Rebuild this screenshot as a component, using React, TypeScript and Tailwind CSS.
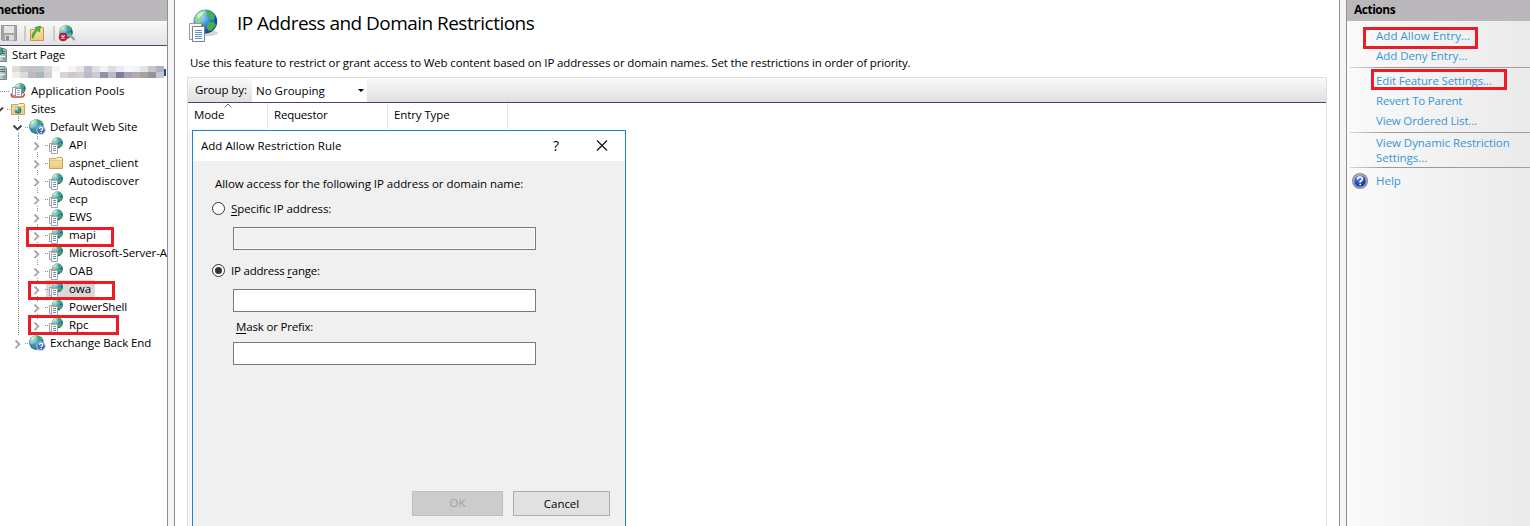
import React from "react";

type IconProps = { x?: number; y?: number };

function Globe({ cx, cy, r }: { cx: number; cy: number; r: number }) {
  return (
    <g transform={`translate(${cx} ${cy}) scale(${r / 10})`}>
      <circle r="10" fill="url(#ocean)" />
      <path d="M-8-5C-6-8-3-9.500 0-9.700L1-7-2-5-3-1-6 2-9 0Z" fill="#8fd68a" />
      <path d="M1-9.500Q6-8.500 8-5L7-1 4-2 2-5Z" fill="#3fb54a" />
      <path d="M2 1 7 0 9 3 6 7 3 8 1 5Z" fill="#4cae3c" />
      <path d="M-5 4-2 3 0 6-2 9-5 8Z" fill="#3f9d4a" />
      <path d="M-7-5Q-5-8-1-8.500L-3-5-6-2Z" fill="#e4f8ee" opacity=".8" />
    </g>
  );
}

function Defs() {
  return (
    <svg className="absolute h-0 w-0" aria-hidden="true">
      <defs>
        <radialGradient id="ocean" cx=".3" cy=".3" r=".8">
          <stop offset="0" stopColor="#c4ecfb" />
          <stop offset=".45" stopColor="#3b93e6" />
          <stop offset=".8" stopColor="#1450bb" />
          <stop offset="1" stopColor="#0d3c96" />
        </radialGradient>
        <linearGradient id="folder" x1="0" y1="0" x2="0" y2="1">
          <stop offset="0" stopColor="#f8e3a6" />
          <stop offset="1" stopColor="#ecca7c" />
        </linearGradient>
        <linearGradient id="tower" x1="0" y1="0" x2="1" y2="0">
          <stop offset="0" stopColor="#dfe8ea" />
          <stop offset="1" stopColor="#8fa3ab" />
        </linearGradient>
        <radialGradient id="help" cx=".4" cy=".25" r=".8">
          <stop offset="0" stopColor="#6f93e8" />
          <stop offset=".6" stopColor="#1f43b0" />
          <stop offset="1" stopColor="#12277a" />
        </radialGradient>
      </defs>
    </svg>
  );
}

function AppIcon({ x = 0, y = 0 }: IconProps) {
  return (
    <g transform={`translate(${x} ${y})`}>
      <Globe cx={9.3} cy={5.9} r={5.6} />
      <path d="M1.500 6.500h6v8h-6z" fill="#fff" stroke="#a3a3a3" />
      <path d="M3.500 7.500h6v9h-6z" fill="#fff" stroke="#a3a3a3" />
      <path d="M5 9.500h3M5 11.500h3M5 13.500h3" stroke="#5a90cc" />
    </g>
  );
}

function FolderIcon({ x = 0, y = 0, globe = false }: IconProps & { globe?: boolean }) {
  return (
    <g transform={`translate(${x} ${y})`}>
      <path d="M.500 2.500V12.500h13v-10l-.500-1H8l-1 1z" fill="url(#folder)" stroke="#c9a357" />
      <path d="M8 3h4.500" stroke="#fffbe9" />
      <path d="M1 4.500h12" stroke="#d9b565" strokeWidth=".6" />
      {globe && <Globe cx={7} cy={8.200} r={3.300} />}
    </g>
  );
}

function SiteIcon({ x = 0, y = 0 }: IconProps) {
  return (
    <g transform={`translate(${x} ${y})`}>
      <Globe cx={7.300} cy={7.500} r={7.300} />
      <circle cx="12" cy="11.200" r="4.300" fill="#4a70ad" stroke="#c9d8ec" />
      <path d="M10.400 9.800q.2-1.400 1.700-1.400t1.600 1.400q0 .9-1.600 1.700v.6M12.100 13v1.200" fill="none" stroke="#fff" strokeWidth="1.200" />
    </g>
  );
}

function PoolsIcon({ x = 0, y = 0 }: IconProps) {
  return (
    <g transform={`translate(${x} ${y})`}>
      <Globe cx={10} cy={5.500} r={5.600} />
      <path d="M1.500 10.500Q.500 13 3 14h9q3-1 2-3.500" fill="none" stroke="#d8463f" strokeWidth="1.600" />
      <path d="M2.500 4.500h5v8h-5z" fill="#fff" stroke="#a0a0a0" />
      <path d="M5.500 5.500h6v8h-6z" fill="#fff" stroke="#909090" />
      <path d="M7 7.500h3M7 9.500h3M7 11.500h3" stroke="#8fa6c4" />
    </g>
  );
}

function ServerIcon({ x = 0, y = 0, globe = false }: IconProps & { globe?: boolean }) {
  return (
    <g transform={`translate(${x} ${y})`}>
      <path d="M-3 1.500H4.500l2 1.500v11.500H-3Z" fill="url(#tower)" stroke="#74858c" />
      <path d="M0 4.500h5M0 6.500h5" stroke="#5a707a" />
      <path d="M0 9.500h5" stroke="#f1f6f7" />
      <path d="M3 12h2" stroke="#55b948" strokeWidth="1.500" />
      {globe && <Globe cx={-1} cy={4} r={4} />}
    </g>
  );
}

function Chevron({ x, open = false }: { x: number; open?: boolean }) {
  return open ? (
    <path d={`M${x - 4} 7.500l4 4 4-4`} fill="none" stroke="#404040" strokeWidth="1.900" />
  ) : (
    <path d={`M${x - 2} 6.500l3.800 3.800-3.800 3.800`} fill="none" stroke="#a6a6a6" strokeWidth="1.900" />
  );
}

type Kind = "start" | "server" | "pools" | "sites" | "site" | "app" | "folder";
type Node = { label: string; kind: Kind; track: string; open?: boolean; selected?: boolean; last?: boolean };

const nodes: Node[] = [
  { label: "Start Page", kind: "start", track: "tracking-[-0.15px]" },
  { label: "", kind: "server", track: "" },
  { label: "Application Pools", kind: "pools", track: "tracking-[0.08px]" },
  { label: "Sites", kind: "sites", track: "tracking-[-0.1px]", open: true },
  { label: "Default Web Site", kind: "site", track: "tracking-[-0.1px]", open: true },
  { label: "API", kind: "app", track: "tracking-[0.1px]" },
  { label: "aspnet_client", kind: "folder", track: "tracking-[-0.1px]" },
  { label: "Autodiscover", kind: "app", track: "tracking-[0px]" },
  { label: "ecp", kind: "app", track: "tracking-[-0.1px]" },
  { label: "EWS", kind: "app", track: "tracking-[-0.1px]" },
  { label: "mapi", kind: "app", track: "tracking-[-0.05px]" },
  { label: "Microsoft-Server-ActiveSync", kind: "app", track: "tracking-[-0.1px]" },
  { label: "OAB", kind: "app", track: "tracking-[0.1px]" },
  { label: "owa", kind: "app", track: "tracking-[-0.1px]", selected: true },
  { label: "PowerShell", kind: "app", track: "tracking-[-0.15px]" },
  { label: "Rpc", kind: "app", track: "tracking-[-0.05px]" },
  { label: "Exchange Back End", kind: "site", track: "tracking-[-0.1px]", last: true },
];

function Gutter({ node }: { node: Node }) {
  const dots = { stroke: "#8a8a8a", strokeDasharray: "1 1", fill: "none" };
  switch (node.kind) {
    case "start":
    case "server":
      return (
        <svg className="h-[18px] w-3 shrink-0">
          <ServerIcon y={1} globe={node.kind === "start"} />
        </svg>
      );
    case "pools":
      return (
        <svg className="h-[18px] w-[31px] shrink-0">
          <path d="M0 9.500h10" {...dots} />
          <PoolsIcon x={10} y={1} />
        </svg>
      );
    case "sites":
      return (
        <svg className="h-[18px] w-[31px] shrink-0">
          <Chevron x={-1} open />
          <path d="M7 9.500h4M18.500 16v2" {...dots} />
          <FolderIcon x={11} y={2} globe />
        </svg>
      );
    case "site":
      return (
        <svg className="h-[18px] w-[50px] shrink-0">
          <path d={node.last ? "M18.500 0v2M25 9.500h4" : "M18.500 0v3M18.500 15v3M25 9.500h4M37.500 16v2"} {...dots} />
          <Chevron x={node.last ? 17.500 : 17.500} open={node.open} />
          <SiteIcon x={29} y={1} />
        </svg>
      );
    default:
      return (
        <svg className="h-[18px] w-[69px] shrink-0">
          {node.selected && <path d="M46 0h23v18h-23z" fill="#d9d9d9" />}
          <path d="M18.500 0v18M37.500 0v4M37.500 16v2M45 9.500h4" {...dots} />
          <Chevron x={36.500} />
          {node.kind === "folder" ? <FolderIcon x={49} y={2} /> : <AppIcon x={48} y={1} />}
        </svg>
      );
  }
}

const mosaic = [
  "#d9e0cf", "#c9c5ca", "#c6bfc5", "#bfc4c6", "#d7d6d9", "#f5f5f5", "#ffffff", "#f5f3f6", "#e8e5e9", "#b9c4cc", "#dedfe5", "#f0f3f3", "#dcdce4", "#eeeaf1", "#f3f8fa", "#f1f2f7", "#e3e3ea", "#c9c4ce", "#aeb2bd",
  "#eef0e4", "#dcd9da", "#bcb9bd", "#a9b5bb", "#d2d0d6", "#ffffff", "#d7d3d7", "#ccc8d2", "#d6cfcc", "#bbb8ca", "#c9c9d0", "#8b93a9", "#b9bac4", "#827b9b", "#a8a0b3", "#b1aab2", "#a7a395", "#97919d", "#c4c6d0",
];

function Mosaic() {
  return (
    <svg className="mb-[2px] h-3 w-[154px]" viewBox="0 0 154 12" shapeRendering="crispEdges">
      {mosaic.map((c, i) => (
        <rect key={i} x={(i % 19) * 8} y={i < 19 ? 0 : 6} width="8" height="6" fill={c} />
      ))}
      <path d="M152 3h1.500v7H152z" fill="#274b93" />
    </svg>
  );
}

function Connections() {
  return (
    <aside className="flex w-[168px] shrink-0 flex-col overflow-hidden border-r border-[#8f8f8f] bg-white">
      <h2 className="flex h-[21px] shrink-0 items-center bg-[#bbb8bb] text-[12px] font-bold tracking-[-0.45px]">
        <span className="-ml-[25px] pb-px">Connections</span>
      </h2>
      <div className="flex h-[25px] shrink-0 border-b border-[#45456f] bg-linear-to-b from-[#f9f9f9] to-[#e3e1e3]">
        <svg className="h-6 w-[100px]">
          <path d="M1.500 4.500h15v15h-14l-1-1z" fill="#a6a6a6" stroke="#969696" />
          <path d="M4 5h10v7H4z" fill="#e6e6e6" />
          <path d="M5 14h9v5.500H5z" fill="#dadada" />
          <path d="M6 15h3v4.500H6z" fill="#8e8e8e" />
          <path d="M25 5v15M54 5v15" stroke="#c5c2b0" strokeWidth="1.500" />
          <path d="M30.500 8.500h6l1-2h6v13h-13z" fill="url(#folder)" stroke="#c79c43" />
          <path d="M32 17q0-7 4.500-8l-1.500-2.500L40.500 5l-1 6-1.700-1.500Q35 11 33 17Z" fill="#48bd3a" stroke="#218a25" strokeWidth=".6" />
          <Globe cx={66} cy={11} r={6.800} />
          <circle cx="63" cy="16" r="4" fill="#c91f28" stroke="#8f1720" strokeWidth=".5" />
          <path d="M61.500 14.500l3 3m0-3-3 3" stroke="#fff" strokeWidth="1.300" />
          <path d="M67 15q2-2 4 0l3.500 4" fill="none" stroke="#8fa0ab" strokeWidth="2.200" />
        </svg>
      </div>
      <div className="flex flex-col">
        {nodes.map((node) => (
          <div key={node.kind + node.label} className="flex h-[18px] items-center whitespace-nowrap">
            <Gutter node={node} />
            {node.kind === "server" ? (
              <Mosaic />
            ) : node.selected ? (
              <span className={`flex h-[18px] w-[26px] items-center bg-[#d9d9d9] pb-px ${node.track}`}>{node.label}</span>
            ) : (
              <span className={`pb-px ${node.track}`}>{node.label}</span>
            )}
          </div>
        ))}
      </div>
    </aside>
  );
}

function Radio({ checked = false }: { checked?: boolean }) {
  return (
    <svg className="mb-px h-[13px] w-[13px] shrink-0">
      <circle cx="6.500" cy="6.500" r="6" fill="#fff" stroke="#333" />
      {checked && <circle cx="6.500" cy="6.500" r="3.500" fill="#333" />}
    </svg>
  );
}

function RuleDialog() {
  return (
    <section className="absolute top-[130px] left-[17px] flex h-[420px] w-[434px] flex-col border border-[#1883d7] bg-[#f0f0f0]">
      <div className="flex h-[30px] shrink-0 items-center bg-white pl-2">
        <h3 className="w-[352px] tracking-[0.02px]">Add Allow Restriction Rule</h3>
        <span className="w-[43px] text-[14px] leading-[14px]">?</span>
        <svg className="h-3 w-3">
          <path d="M1 .500l10 10M11 .500l-10 10" stroke="#111" strokeWidth="1.200" />
        </svg>
      </div>
      <p className="mt-[13px] ml-[22px] h-5 leading-5 tracking-[-0.05px]">Allow access for the following IP address or domain name:</p>
      <label className="mt-[5px] ml-[19px] flex h-5 items-center gap-[6px] tracking-[-0.1px]">
        <Radio />
        <span><span className="underline underline-offset-2">S</span>pecific IP address:</span>
      </label>
      <div className="mt-2 ml-10 h-[23px] w-[303px] shrink-0 border border-[#7a7a7a] shadow-[inset_0_0_0_1px_#fafafa]" />
      <label className="mt-[11px] ml-[19px] flex h-5 items-center gap-[6px] tracking-[-0.22px]">
        <Radio checked />
        <span>IP address <span className="underline underline-offset-2">r</span>ange:</span>
      </label>
      <div className="mt-2 ml-10 h-[23px] w-[303px] shrink-0 border border-[#7a7a7a] bg-white" />
      <p className="mt-[5px] ml-[43px] h-5 leading-5 tracking-[-0.17px]"><span className="underline underline-offset-2">M</span>ask or Prefix:</p>
      <div className="mt-[5px] ml-10 h-[23px] w-[303px] shrink-0 border border-[#7a7a7a] bg-white" />
      <div className="mt-[126px] mr-[15px] flex justify-end gap-[10px]">
        <button className="h-[25px] w-[91px] border border-[#bfbfbf] bg-[#cccccc] pb-px text-[#a0a0a0]">OK</button>
        <button className="h-[25px] w-[97px] border border-[#adadad] bg-[#e1e1e1] tracking-[-0.05px]">Cancel</button>
      </div>
    </section>
  );
}

function Main() {
  return (
    <main className="relative flex min-w-0 flex-1 flex-col border-x border-[#8f8f8f] bg-white pr-3 pl-3">
      <header className="flex h-[47px] shrink-0 items-center">
        <svg className="mt-[3px] -ml-px h-11 w-[51px] shrink-0">
          <ellipse cx="22" cy="30" rx="10" ry="3" fill="#d5d5d5" />
          <Globe cx={19.300} cy={18.500} r={11.900} />
          <path d="M3.500 20.500h12v16h-12z" fill="#f8f6f1" stroke="#9c988e" />
          <path d="M6.500 23.500h12v15h-12z" fill="#fff" stroke="#808080" />
          <path d="M9 27.500h7M9 29.500h7M9 31.500h7M9 33.500h7M9 35.500h7" stroke="#5b93cf" />
        </svg>
        <h1 className="mb-px text-[19px] leading-6 tracking-[-0.54px] whitespace-nowrap">IP Address and Domain Restrictions</h1>
      </header>
      <p className="mt-[7px] ml-[3px] h-[18px] shrink-0 leading-[18px] tracking-[-0.144px] whitespace-nowrap">
        Use this feature to restrict or grant access to Web content based on IP addresses or domain names. Set the restrictions in order of priority.
      </p>
      <div className="mt-[5px] flex flex-1 flex-col border border-b-0 border-[#dedede]">
        <div className="flex h-[25px] shrink-0 border-b border-[#45456f] bg-linear-to-b from-[#fafafa] to-[#e1dfe1]">
          <span className="w-16 pt-[3px] pl-[7px] leading-[18px] tracking-[-0.12px] whitespace-nowrap">Group by:</span>
          <div className="mt-px flex h-[23px] w-[115px] items-center justify-between bg-white pr-[3px] pl-1">
            <span className="tracking-[0px]">No Grouping</span>
            <svg className="h-[3px] w-[6px]"><path d="M0 0h6L3 3z" fill="#000" /></svg>
          </div>
        </div>
        <div className="flex h-[26px] shrink-0 leading-[23px] tracking-[-0.1px]">
          <div className="relative w-20 border-r border-[#e5e5e5] pl-[6px]">
            Mode
            <svg className="absolute top-0 left-[36px] h-[5px] w-2"><path d="M.500 4.500 4 1l3.500 3.500" fill="none" stroke="#666" /></svg>
          </div>
          <div className="w-[120px] border-r border-[#e5e5e5] pl-[6px] tracking-[-0.2px]">Requestor</div>
          <div className="w-[120px] border-r border-[#e5e5e5] pl-[6px]">Entry Type</div>
        </div>
        <div className="w-20 flex-1 bg-[#f7f7f7]" />
      </div>
      <RuleDialog />
    </main>
  );
}

function Rule() {
  return <div className="ml-[3px] h-px shrink-0 bg-linear-to-r from-[#d8d8d8] via-[#999] via-20% to-[#a0a0a0]" />;
}

function Actions() {
  return (
    <aside className="flex w-[184px] shrink-0 flex-col border-l border-[#8f8f8f] bg-linear-to-r from-[#fafafa] to-[#eaeaea] whitespace-nowrap text-[#3795d8]">
      <h2 className="flex h-[21px] shrink-0 items-center bg-[#bbb8bb] pb-px pl-[7px] text-[12px] font-bold tracking-[-0.5px] text-black">Actions</h2>
      <a className="mt-[5px] ml-[29px] h-5 leading-5 tracking-[0.05px]">Add Allow Entry...</a>
      <a className="ml-[29px] h-5 leading-5 tracking-[-0.05px]">Add Deny Entry...</a>
      <div className="h-px" />
      <Rule />
      <a className="mt-[3px] ml-[29px] h-5 leading-5 tracking-[-0.15px]">Edit Feature Settings...</a>
      <a className="ml-[29px] h-5 leading-5 tracking-[-0.2px]">Revert To Parent</a>
      <a className="ml-[29px] h-5 leading-5 tracking-[-0.15px]">View Ordered List...</a>
      <div className="h-px" />
      <Rule />
      <a className="mt-[2px] ml-[29px] h-[31px] leading-[15px] tracking-[-0.05px]">View Dynamic Restriction<br />Settings...</a>
      <div className="h-px" />
      <Rule />
      <a className="mt-[3px] flex h-5 items-center gap-2 pl-[5px]">
        <svg className="mb-px h-4 w-4">
          <circle cx="8" cy="8" r="7.300" fill="url(#help)" stroke="#8b8b8b" strokeWidth="1.400" />
          <circle cx="8" cy="8" r="6.300" fill="none" stroke="#e2e6f2" strokeWidth=".8" />
          <path d="M5.500 6.500q0-2.500 2.500-2.500t2.500 2q0 1.300-2.300 2.500v1M8.200 10.700v1.600" fill="none" stroke="#fff" strokeWidth="1.600" />
        </svg>
        <span className="tracking-[0px]">Help</span>
      </a>
    </aside>
  );
}

function Highlights() {
  return (
    <>
      <div className="absolute top-[227px] left-[26px] h-5 w-[88px] border-3 border-[#ed1c24]" />
      <div className="absolute top-[281px] left-[28px] h-[19px] w-[87px] border-3 border-[#ed1c24]" />
      <div className="absolute top-[315px] left-[28px] h-5 w-[91px] border-3 border-[#ed1c24]" />
      <div className="absolute top-[27px] left-[1363px] h-[22px] w-[115px] border-3 border-[#ed1c24]" />
      <div className="absolute top-[69px] left-[1371px] h-[21px] w-[136px] border-3 border-[#ed1c24]" />
    </>
  );
}

export default function App() {
  return (
    <div className="relative flex h-[526px] w-[1530px] overflow-hidden bg-[#f5f5f5] font-['Open_Sans','Noto_Sans',sans-serif] text-[11.5px] text-black">
      <Defs />
      <Connections />
      <div className="w-[6px] shrink-0" />
      <Main />
      <div className="w-[6px] shrink-0" />
      <Actions />
      <Highlights />
    </div>
  );
}
